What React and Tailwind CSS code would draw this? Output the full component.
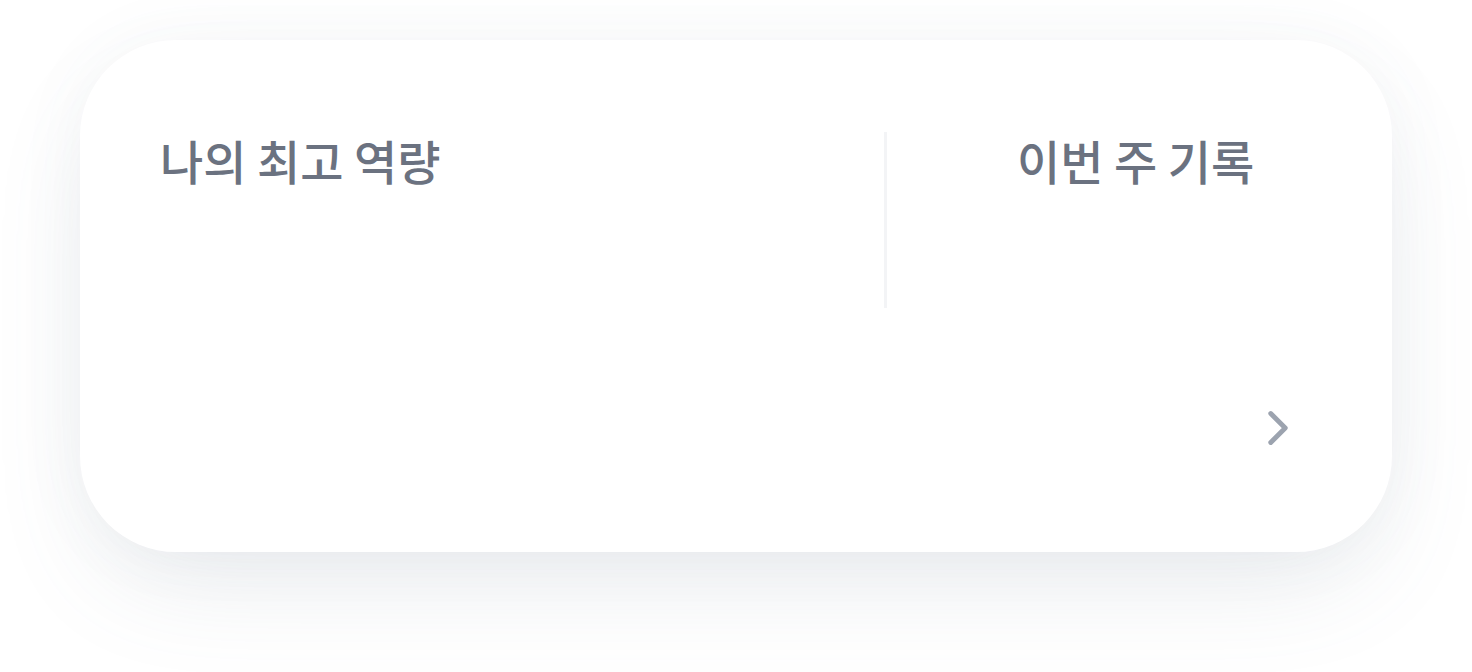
import React from 'react';
import { ChevronRight } from 'lucide-react';

export default function App() {
  return (
    <div className="w-[1472px] h-[672px] bg-white pt-[40px] px-[80px] font-['Noto_Sans_CJK_KR','Noto_Sans',sans-serif]">
      <div className="h-[512px] rounded-[96px] bg-white shadow-[0_44px_110px_-24px_rgba(100,116,139,0.16),0_0_70px_rgba(100,116,139,0.05)] pt-[94px] px-[80px] flex flex-col">
        {/* stats row */}
        <div className="flex h-[176px] -mt-[2px]">
          <div className="w-[724px] shrink-0">
            <h3 className="text-[47px] leading-[1.2] font-medium text-[#6b7280]">나의 최고 역량</h3>
          </div>
          <div className="w-[3px] h-full bg-[#f3f4f6]" />
          <div className="flex-1 pl-[130px]">
            <h3 className="text-[47px] leading-[1.2] font-medium text-[#6b7280] whitespace-nowrap">이번 주 기록</h3>
          </div>
        </div>

        <div className="flex justify-end mt-[91px] mr-[5px]">
          <ChevronRight size={58} strokeWidth={2} className="text-[#9ca3af]" />
        </div>
      </div>
    </div>
  );
}
